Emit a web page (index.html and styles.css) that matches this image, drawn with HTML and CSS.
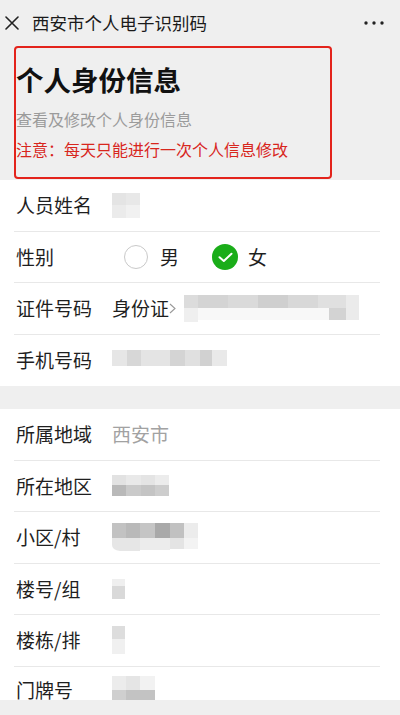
FILE: index.html
```html
<!DOCTYPE html>
<html lang="zh-CN">
<head>
<meta charset="utf-8">
<title>西安市个人电子识别码</title>
<link rel="stylesheet" href="styles.css">
</head>
<body>
<div class="page">
  <header class="topbar">
    <svg class="close" width="14" height="14" viewBox="0 0 14 14"><path d="M1 1 L13 13 M13 1 L1 13" stroke="#222" stroke-width="1.6" stroke-linecap="round" fill="none"/></svg>
    <span class="topbar-title">西安市个人电子识别码</span>
    <svg class="more" width="20" height="4" viewBox="0 0 20 4"><circle cx="2" cy="2" r="1.7" fill="#222"/><circle cx="10" cy="2" r="1.7" fill="#222"/><circle cx="18" cy="2" r="1.7" fill="#222"/></svg>
  </header>

  <section class="intro">
    <h1 class="intro-title">个人身份信息</h1>
    <p class="intro-sub">查看及修改个人身份信息</p>
    <p class="intro-note">注意：每天只能进行一次个人信息修改</p>
  </section>

  <ul class="list">
    <li class="row">
      <span class="label">人员姓名</span>
      <svg class="mosaic" width="28" height="25" viewBox="0 0 28 25">
        <rect x="0" y="0" width="14" height="12" fill="#e4e4e4"/>
        <rect x="14" y="0" width="14" height="12" fill="#e8e8e8"/>
        <rect x="0" y="12" width="14" height="13" fill="#ebebeb"/>
        <rect x="14" y="12" width="14" height="13" fill="#f1f1f1"/>
      </svg>
    </li>
    <li class="row">
      <span class="label">性别</span>
      <span class="radio">
        <span class="radio-off"></span>
        <span class="radio-text">男</span>
      </span>
      <span class="radio radio-second">
        <svg class="radio-on" width="26" height="26" viewBox="0 0 26 26"><circle cx="13" cy="13" r="13" fill="#1aad19"/><path d="M7.5 13.2 L11.8 17 L19.5 9.8" stroke="#fff" stroke-width="2" fill="none" stroke-linecap="round" stroke-linejoin="round"/></svg>
        <span class="radio-text radio-text-on">女</span>
      </span>
    </li>
    <li class="row">
      <span class="label">证件号码</span>
      <span class="value">身份证</span>
      <svg class="chevron" width="7" height="11" viewBox="0 0 7 11"><path d="M1 1 L6 5.5 L1 10" stroke="#999" stroke-width="1.1" fill="none"/></svg>
      <svg class="mosaic mosaic-id" width="175" height="27" viewBox="0 0 175 27">
        <rect x="0" y="0" width="14" height="13" fill="#dcdcdc"/>
        <rect x="14" y="0" width="30" height="13" fill="#d4d4d4"/>
        <rect x="44" y="0" width="30" height="13" fill="#dadada"/>
        <rect x="74" y="0" width="30" height="13" fill="#cfcfcf"/>
        <rect x="104" y="0" width="30" height="13" fill="#d8d8d8"/>
        <rect x="134" y="0" width="28" height="13" fill="#e0e0e0"/>
        <rect x="162" y="0" width="13" height="25" fill="#ebebeb"/>
        <rect x="0" y="13" width="14" height="14" fill="#efefef"/>
        <rect x="14" y="13" width="131" height="12" fill="#f8f8f8"/>
        <rect x="145" y="13" width="17" height="12" fill="#d3d3d3"/>
      </svg>
    </li>
    <li class="row row-last">
      <span class="label">手机号码</span>
      <svg class="mosaic mosaic-phone" width="115" height="16" viewBox="0 0 115 16">
        <rect x="0" y="0" width="15" height="16" fill="#e6e6e6"/>
        <rect x="15" y="0" width="14" height="16" fill="#d7d7d7"/>
        <rect x="29" y="0" width="29" height="16" fill="#e4e4e4"/>
        <rect x="58" y="0" width="15" height="16" fill="#d4d4d4"/>
        <rect x="73" y="0" width="15" height="16" fill="#e0e0e0"/>
        <rect x="88" y="0" width="12" height="16" fill="#d1d1d1"/>
        <rect x="100" y="0" width="15" height="16" fill="#e9e9e9"/>
      </svg>
    </li>
  </ul>

  <ul class="list list-second">
    <li class="row">
      <span class="label">所属地域</span>
      <span class="value value-muted">西安市</span>
    </li>
    <li class="row">
      <span class="label">所在地区</span>
      <svg class="mosaic" width="57" height="21" viewBox="0 0 57 21">
        <rect x="0" y="0" width="14" height="10" fill="#e2e2e2"/>
        <rect x="14" y="0" width="15" height="10" fill="#e9e9e9"/>
        <rect x="29" y="0" width="14" height="10" fill="#e4e4e4"/>
        <rect x="43" y="0" width="14" height="10" fill="#ececec"/>
        <rect x="0" y="10" width="14" height="11" fill="#b9b9b9"/>
        <rect x="14" y="10" width="15" height="11" fill="#cacaca"/>
        <rect x="29" y="10" width="14" height="11" fill="#c4c4c4"/>
        <rect x="43" y="10" width="14" height="11" fill="#cdcdcd"/>
      </svg>
    </li>
    <li class="row">
      <span class="label">小区/村</span>
      <svg class="mosaic" width="86" height="28" viewBox="0 0 86 28">
        <rect x="0" y="0" width="14" height="15" fill="#c2c2c2"/>
        <rect x="14" y="0" width="14" height="15" fill="#b9b9b9"/>
        <rect x="28" y="0" width="15" height="15" fill="#c5c5c5"/>
        <rect x="43" y="0" width="15" height="15" fill="#a9a9a9"/>
        <rect x="58" y="0" width="14" height="15" fill="#c1c1c1"/>
        <rect x="72" y="0" width="14" height="15" fill="#ececec"/>
        <path d="M0 15 H28 V28 H8 Q0 27 0 22 Z" fill="#e6e6e6"/>
        <rect x="28" y="15" width="30" height="12" fill="#ececec"/>
        <rect x="58" y="15" width="14" height="11" fill="#e4e4e4"/>
        <rect x="72" y="15" width="14" height="11" fill="#f3f3f3"/>
      </svg>
    </li>
    <li class="row">
      <span class="label">楼号/组</span>
      <svg class="mosaic" width="13" height="20" viewBox="0 0 13 20">
        <rect x="0" y="0" width="13" height="7" fill="#efefef"/>
        <rect x="0" y="7" width="13" height="13" fill="#d9d9d9"/>
      </svg>
    </li>
    <li class="row">
      <span class="label">楼栋/排</span>
      <svg class="mosaic" width="13" height="28" viewBox="0 0 13 28">
        <rect x="0" y="0" width="13" height="13" fill="#dddddd"/>
        <rect x="0" y="13" width="13" height="15" fill="#f0f0f0"/>
      </svg>
    </li>
    <li class="row row-last row-cut">
      <span class="label">门牌号</span>
      <svg class="mosaic" width="43" height="28" viewBox="0 0 43 28">
        <rect x="0" y="0" width="14" height="14" fill="#ececec"/>
        <rect x="14" y="0" width="14" height="14" fill="#e5e5e5"/>
        <rect x="28" y="0" width="15" height="14" fill="#f2f2f2"/>
        <rect x="0" y="14" width="14" height="14" fill="#cfcfcf"/>
        <rect x="14" y="14" width="29" height="14" fill="#c3c3c3"/>
      </svg>
    </li>
  </ul>

  <div class="bottombar"></div>
</div>
</body>
</html>
```

FILE: styles.css
```css
html, body {
  margin: 0;
  padding: 0;
  height: 715px;
  overflow: hidden;
  background: #efefef;
  font-family: "Noto Sans CJK SC", "Noto Sans", sans-serif;
  color: #1d1d1d;
}

.page {
  display: flex;
  flex-direction: column;
}

.topbar {
  height: 46px;
  display: flex;
  align-items: center;
  padding: 0 16px 0 5px;
  box-sizing: border-box;
}

.close {
  flex: none;
  display: block;
}

.topbar-title {
  margin-left: 13px;
  font-size: 17.5px;
  line-height: 24px;
  color: #1a1a1a;
}

.more {
  margin-left: auto;
  display: block;
}

.intro {
  margin: 0 68px 1.5px 14px;
  border: 2px solid #e3231b;
  border-radius: 4px;
  padding: 14px 0 16.5px 0;
}

.intro-title {
  margin: 0;
  font-size: 27.5px;
  line-height: 34px;
  font-weight: 700;
  color: #111;
}

.intro-sub {
  margin: 12px 0 0;
  font-size: 16px;
  line-height: 22px;
  color: #9b9b9b;
}

.intro-note {
  margin: 8px 0 0;
  font-size: 16px;
  line-height: 22px;
  color: #d8261d;
}

.list {
  list-style: none;
  margin: 0;
  padding: 0;
  background: #fff;
}

.list-second {
  margin-top: 23px;
}

.row {
  height: 51.5px;
  box-sizing: border-box;
  margin: 0 20px 0 14px;
  padding-left: 2px;
  border-bottom: 1px solid #e8e8e8;
  display: flex;
  align-items: center;
}

.row-last {
  border-bottom: none;
}

.row-cut {
  padding-bottom: 4px;
}

.label {
  width: 96px;
  flex: none;
  font-size: 19px;
  line-height: 26px;
  color: #1f1f1f;
}

.value {
  font-size: 19px;
  line-height: 26px;
  color: #1f1f1f;
}

.value-muted {
  color: #a2a2a2;
}

.chevron {
  display: block;
  margin-left: 0;
}

.mosaic {
  display: block;
  filter: blur(0.6px);
}

.mosaic-id {
  margin-left: 8px;
}

.mosaic-phone {
  margin-top: -4px;
}

.radio {
  display: flex;
  align-items: center;
  margin-left: 12px;
}

.radio-second {
  margin-left: 33px;
}

.radio-off {
  width: 24px;
  height: 24px;
  box-sizing: border-box;
  border: 1px solid #c9c9c9;
  border-radius: 50%;
}

.radio-on {
  display: block;
}

.radio-text {
  margin-left: 12px;
  font-size: 19px;
  line-height: 26px;
  color: #1f1f1f;
}

.radio-text-on {
  margin-left: 10px;
}

.bottombar {
  position: fixed;
  left: 0;
  right: 0;
  bottom: 0;
  height: 15px;
  background: #efefef;
}
```
